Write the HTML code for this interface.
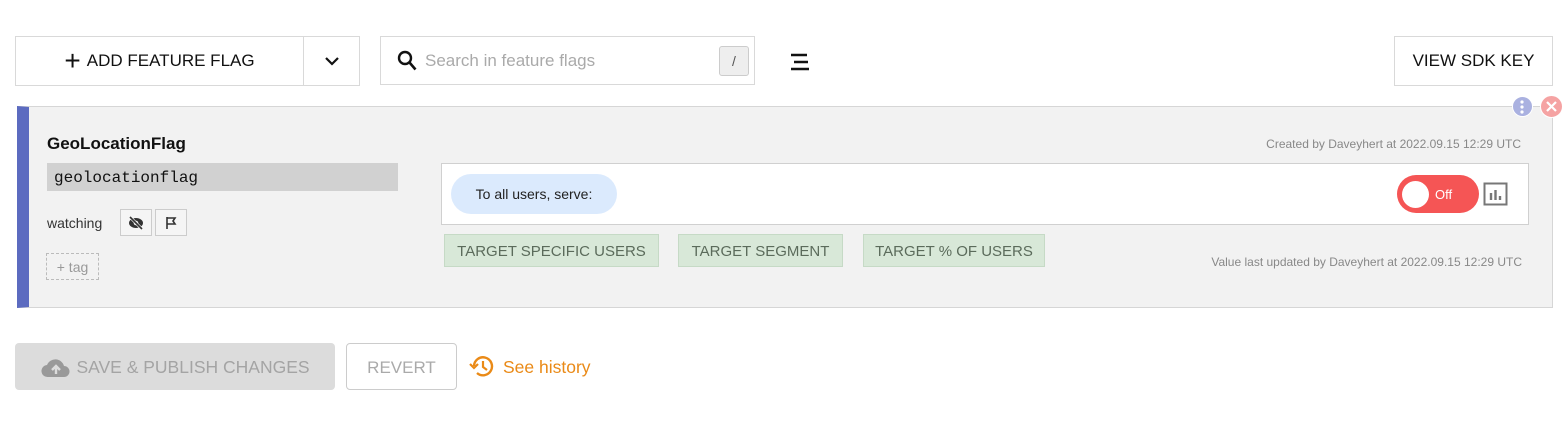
<!DOCTYPE html>
<html><head><style>
*{box-sizing:border-box;margin:0;padding:0}
body{width:1565px;height:433px;background:#fff;font-family:"Liberation Sans",sans-serif;position:relative;overflow:hidden;color:#111}
.a{position:absolute}
.btn{border:1px solid #d9d9d9;background:#fff;display:flex;align-items:center;justify-content:center}
.tb{position:absolute;top:234px;height:33px;background:#d8e8d8;border:1px solid #c6dac6;color:#5b6b5b;font-size:15px;display:flex;align-items:center;justify-content:center}
</style></head><body>
<div class="a btn" style="left:15px;top:36px;width:289px;height:50px;font-size:17px;">
<span style="font-size:28px;font-weight:300;margin-right:6px;line-height:1">+</span>ADD FEATURE FLAG</div>
<div class="a btn" style="left:303px;top:36px;width:57px;height:50px;">
<svg width="16" height="10"><path d="M2 2l6 6 6-6" stroke="#111" stroke-width="2.2" fill="none"/></svg></div>
<div class="a btn" style="left:380px;top:36px;width:375px;height:49px;justify-content:flex-start;padding-left:16px;">
<svg width="20" height="22"><circle cx="8" cy="8" r="6" stroke="#111" stroke-width="2.4" fill="none"/><path d="M12.5 12.5l6 7" stroke="#111" stroke-width="2.6"/></svg>
<span style="color:#aaa;font-size:17px;margin-left:8px">Search in feature flags</span></div>
<div class="a" style="left:719px;top:46px;width:30px;height:30px;background:#eee;border:1px solid #ccc;border-radius:3px;color:#555;font-size:14px;text-align:center;line-height:28px">/</div>
<svg class="a" style="left:789px;top:53px" width="22" height="18"><path d="M2 2h16M5 9h14M2 16h18" stroke="#111" stroke-width="2.4"/></svg>
<div class="a btn" style="left:1394px;top:36px;width:159px;height:50px;font-size:17px;">VIEW SDK KEY</div>

<div class="a" style="left:17px;top:106px;width:1536px;height:202px;background:#f2f2f2;border:1px solid #d6d6d6;border-left:12px solid #5c6bc0"></div>
<div class="a" style="left:47px;top:134px;font-size:17px;font-weight:bold">GeoLocationFlag</div>
<div class="a" style="left:1120px;top:137px;width:401px;text-align:right;font-size:12px;color:#888">Created by Daveyhert at 2022.09.15 12:29 UTC</div>
<div class="a" style="left:47px;top:163px;width:351px;height:28px;background:#d1d1d1;font-family:'Liberation Mono',monospace;font-size:16px;padding-left:7px;line-height:30px">geolocationflag</div>
<div class="a" style="left:47px;top:215px;font-size:14px;color:#333">watching</div>
<div class="a btn" style="left:120px;top:209px;width:32px;height:27px;border-color:#ccc;background:#f5f5f5">
<svg width="18" height="14"><ellipse cx="9" cy="7" rx="7" ry="5" fill="#333"/><circle cx="9" cy="7" r="2.3" fill="#f5f5f5"/><path d="M3 1l12 12" stroke="#f5f5f5" stroke-width="3"/><path d="M3 1l12 12" stroke="#333" stroke-width="1.6"/></svg></div>
<div class="a btn" style="left:155px;top:209px;width:32px;height:27px;border-color:#ccc;background:#f5f5f5">
<svg width="12" height="14"><path d="M2 1v12M2 2h8l-2 3 2 3H2" stroke="#333" stroke-width="1.6" fill="none"/></svg></div>
<div class="a" style="left:46px;top:253px;width:53px;height:27px;border:1px dashed #bbb;color:#999;font-size:14px;text-align:center;line-height:26px">+ tag</div>

<div class="a" style="left:441px;top:163px;width:1088px;height:62px;background:#fff;border:1px solid #d0d0d0"></div>
<div class="a" style="left:451px;top:174px;width:166px;height:40px;background:#dbeafd;border-radius:20px;font-size:14px;line-height:41px;text-align:center;color:#222">To all users, serve:</div>
<div class="a" style="left:1397px;top:175px;width:82px;height:38px;background:#f55555;border-radius:19px"></div>
<div class="a" style="left:1402px;top:181px;width:27px;height:27px;background:#fff;border-radius:50%"></div>
<div class="a" style="left:1435px;top:187px;color:#fff;font-size:13px">Off</div>
<svg class="a" style="left:1483px;top:182px" width="25" height="24"><rect x="1.5" y="1.5" width="22" height="21" fill="none" stroke="#777" stroke-width="2"/><path d="M8 18v-7M12.5 18v-10M17 18v-4" stroke="#777" stroke-width="2.4"/></svg>

<div class="tb" style="left:444px;width:215px;padding-top:1px">TARGET SPECIFIC USERS</div>
<div class="tb" style="left:678px;width:165px;padding-top:1px">TARGET SEGMENT</div>
<div class="tb" style="left:863px;width:182px;padding-top:1px">TARGET % OF USERS</div>
<div class="a" style="left:1120px;top:255px;width:402px;text-align:right;font-size:12px;color:#888">Value last updated by Daveyhert at 2022.09.15 12:29 UTC</div>

<div class="a" style="left:1512px;top:96px;width:21px;height:21px;border-radius:50%;background:#aab1e0;border:1px solid #fff"></div>
<svg class="a" style="left:1519px;top:99px" width="6" height="16"><circle cx="3" cy="3" r="1.6" fill="#fff"/><circle cx="3" cy="8" r="1.6" fill="#fff"/><circle cx="3" cy="13" r="1.6" fill="#fff"/></svg>
<div class="a" style="left:1540px;top:95px;width:23px;height:23px;border-radius:50%;background:#f5a3a3;border:1px solid #fff"></div>
<svg class="a" style="left:1545px;top:100px" width="13" height="13"><path d="M2 2l9 9M11 2l-9 9" stroke="#fff" stroke-width="2.2"/></svg>

<div class="a" style="left:15px;top:343px;width:320px;height:47px;background:#dcdcdc;border-radius:4px;color:#a4a4a4;font-size:17.5px;display:flex;align-items:center;justify-content:center;padding-top:2px">
<svg width="32" height="22" style="margin-right:4px"><path d="M8 20a6 6 0 0 1-1-12 9 9 0 0 1 17 1 5.5 5.5 0 0 1 0 11z" fill="#999"/><path d="M16 17v-7M12 13l4-4 4 4" stroke="#dcdcdc" stroke-width="2.4" fill="none"/></svg>SAVE &amp; PUBLISH CHANGES</div>
<div class="a" style="left:346px;top:343px;width:111px;height:47px;border:1px solid #ccc;border-radius:4px;color:#aaa;font-size:17px;text-align:center;line-height:47px">REVERT</div>
<svg class="a" style="left:469px;top:354px" width="26" height="24"><path d="M5 12a9 9 0 1 1 3 7" stroke="#ea8a17" stroke-width="2.4" fill="none"/><path d="M1 10l4 4 4-4" stroke="#ea8a17" stroke-width="2.2" fill="none"/><path d="M14 7v6l4 3" stroke="#ea8a17" stroke-width="2.2" fill="none"/></svg>
<div class="a" style="left:503px;top:357px;color:#ea8a17;font-size:17.5px">See history</div>
</body></html>
